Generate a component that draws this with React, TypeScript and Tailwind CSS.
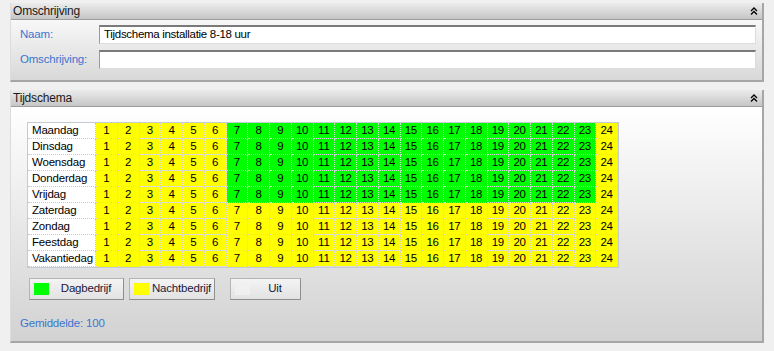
import React from "react";

const days = [
  { name: "Maandag", day: true },
  { name: "Dinsdag", day: true },
  { name: "Woensdag", day: true },
  { name: "Donderdag", day: true },
  { name: "Vrijdag", day: true },
  { name: "Zaterdag", day: false },
  { name: "Zondag", day: false },
  { name: "Feestdag", day: false },
  { name: "Vakantiedag", day: false },
];

const hours = Array.from({ length: 24 }, (_, i) => i + 1);

function Chevrons() {
  return (
    <svg width="8" height="8" viewBox="0 0 8 8" className="mr-[4px]" aria-hidden="true">
      <path d="M1 4 L4 1 L7 4" fill="none" stroke="#000" strokeWidth="1.3" />
      <path d="M1 7.5 L4 4.5 L7 7.5" fill="none" stroke="#000" strokeWidth="1.3" />
    </svg>
  );
}

function PanelHeader({ title }: { title: string }) {
  return (
    <div className="flex h-[17px] items-center justify-between border-b border-[#9c9c9c] bg-gradient-to-b from-[#ececec] to-[#c6c6c6] pl-[2px]">
      <span className="text-[12px] leading-none tracking-[-0.2px] text-[#1a1a1a]">{title}</span>
      <Chevrons />
    </div>
  );
}

function Field({ label, value }: { label: string; value: string }) {
  return (
    <div className="flex items-center">
      <span className="w-[88px] pl-[9px] text-[11.5px] tracking-[-0.2px] text-[#3a76d0]">{label}</span>
      <div className="flex h-[19px] flex-1 items-center border border-t-2 border-[#dcdcdc] border-t-[#7a7a7a] border-l-[#9a9a9a] bg-white pl-[4px] text-[11.5px] tracking-[-0.3px] text-black">
        {value}
      </div>
    </div>
  );
}

function LegendButton({ label, color, width }: { label: string; color: string; width: string }) {
  return (
    <div
      className={`flex h-[22px] items-center border border-[#b4b4b4] border-r-[#8e8e8e] border-b-[#8e8e8e] bg-gradient-to-b from-[#f4f4f4] to-[#e2e2e2] pl-[4px] ${width}`}
    >
      <span className={`h-[12px] w-[15px] ${color}`} />
      <span className="flex-1 text-center text-[11.5px] tracking-[-0.2px] text-[#1a1a3a]">{label}</span>
    </div>
  );
}

export default function App() {
  return (
    <div
      className="flex h-[351px] w-[774px] flex-col gap-[8px] bg-[#f0f0f0] pl-[10px] pr-[10px] pt-[3px]"
      style={{ fontFamily: '"Liberation Sans", Arial, sans-serif' }}
    >
      <section className="flex h-[79px] flex-col border-r-2 border-b-2 border-[#a6a6a6] border-l border-l-[#dcdcdc]">
        <PanelHeader title="Omschrijving" />
        <div className="flex flex-1 flex-col gap-[6px] bg-gradient-to-b from-[#f8f8f8] to-[#d8d8d8] pr-[6px] pt-[5px]">
          <Field label="Naam:" value="Tijdschema installatie 8-18 uur" />
          <Field label="Omschrijving:" value="" />
        </div>
      </section>

      <section className="flex h-[253px] flex-col border-r-2 border-b-2 border-[#a6a6a6] border-l border-l-[#dcdcdc]">
        <PanelHeader title="Tijdschema" />
        <div className="flex flex-1 flex-col bg-gradient-to-b from-[#ffffff] to-[#d2d2d2] pl-[16px] pt-[15px]">
          <div className="grid w-fit grid-cols-[68px_repeat(24,21.75px)] border border-[#c4cad6] text-[11.5px] leading-none tracking-[-0.2px] text-black">
            {days.map((d) => (
              <React.Fragment key={d.name}>
                <div className="flex h-[16px] items-center border-r border-b border-dotted border-[#c8c8c8] bg-white pl-[4px]">
                  {d.name}
                </div>
                {hours.map((h) => {
                  const green = d.day && h >= 7 && h <= 23;
                  return (
                    <div
                      key={h}
                      className={`flex h-[16px] items-center justify-center border-r border-b border-dotted border-[#d4d4d4] ${
                        green ? "bg-[#00ff00]" : "bg-[#ffff00]"
                      }`}
                    >
                      {h}
                    </div>
                  );
                })}
              </React.Fragment>
            ))}
          </div>

          <div className="mt-[10px] flex items-center pl-[2px]">
            <LegendButton label="Dagbedrijf" color="bg-[#00ff00]" width="w-[95px]" />
            <div className="ml-[5px]">
              <LegendButton label="Nachtbedrijf" color="bg-[#ffff00]" width="w-[86px]" />
            </div>
            <div className="ml-[15px]">
              <LegendButton label="Uit" color="bg-[#f0f0f0]" width="w-[71px]" />
            </div>
          </div>

          <div className="mt-[15px] text-[11.5px] tracking-[-0.2px] text-[#3a76d0]" style={{ marginLeft: -7 }}>
            Gemiddelde: 100
          </div>
        </div>
      </section>
    </div>
  );
}
